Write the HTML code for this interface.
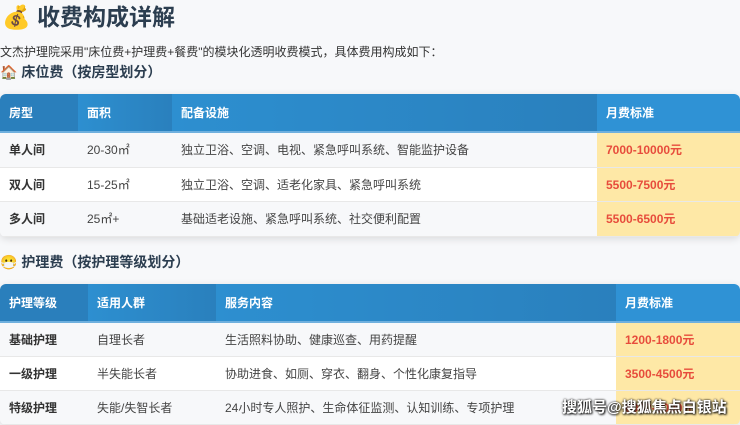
<!DOCTYPE html>
<html><head><meta charset="utf-8"><style>
*{margin:0;padding:0;box-sizing:border-box}
body{width:740px;height:422px;overflow:hidden;background:#f7f8fa;font-family:"Liberation Sans","Noto Sans CJK SC",sans-serif;color:#333;position:relative}
.h1{position:absolute;left:2px;top:0;font-size:23px;font-weight:bold;color:#2c3e50;line-height:34px}
.p{position:absolute;left:0;top:43px;font-size:12px;color:#333}
.h2{position:absolute;left:0;font-size:14px;font-weight:bold;color:#2c3e50}
table{position:absolute;left:0;border-collapse:collapse;font-size:12px;box-shadow:0 2px 8px rgba(0,0,0,.12);border-radius:6px;overflow:hidden}
th{background:linear-gradient(90deg,#2d8fd0,#2a80bd);color:#fff;text-align:left;padding-left:9px;font-weight:bold;height:38px;border-bottom:2px solid #6fb0de}
th.a{background:#2a7fbc}
th.b{background:#2f92d5}
td{padding-left:9px;border-bottom:1px solid #e8e8e8;background:#f7f8fa;color:#444}
tr.w td{background:#fff}
td.f{font-weight:bold;color:#333}
td.pr{background:#fee8a6!important;color:#e74c3c;font-weight:bold}
.wm{position:absolute;left:562px;top:396px;font-size:15px;color:#fff;font-weight:bold;text-shadow:0 0 2px #000,1px 1px 2px #000}
</style></head><body>
<div class="h1">💰 收费构成详解</div>
<div class="p">文杰护理院采用"床位费+护理费+餐费"的模块化透明收费模式，具体费用构成如下：</div>
<div class="h2" style="top:62px">🏠 床位费（按房型划分）</div>
<table style="top:94px;width:740px">
<tr><th class="a" style="width:78px">房型</th><th style="width:94px">面积</th><th style="width:425px">配备设施</th><th class="b">月费标准</th></tr>
<tr style="height:35px"><td class="f">单人间</td><td>20-30㎡</td><td>独立卫浴、空调、电视、紧急呼叫系统、智能监护设备</td><td class="pr">7000-10000元</td></tr>
<tr class="w" style="height:34px"><td class="f">双人间</td><td>15-25㎡</td><td>独立卫浴、空调、适老化家具、紧急呼叫系统</td><td class="pr">5500-7500元</td></tr>
<tr style="height:35px"><td class="f">多人间</td><td>25㎡+</td><td>基础适老设施、紧急呼叫系统、社交便利配置</td><td class="pr">5500-6500元</td></tr>
</table>
<div class="h2" style="top:252px">😷 护理费（按护理等级划分）</div>
<table style="top:284px;width:740px">
<tr><th class="a" style="width:88px">护理等级</th><th style="width:128px">适用人群</th><th style="width:400px">服务内容</th><th class="b">月费标准</th></tr>
<tr style="height:34px"><td class="f">基础护理</td><td>自理长者</td><td>生活照料协助、健康巡查、用药提醒</td><td class="pr">1200-1800元</td></tr>
<tr class="w" style="height:34px"><td class="f">一级护理</td><td>半失能长者</td><td>协助进食、如厕、穿衣、翻身、个性化康复指导</td><td class="pr">3500-4500元</td></tr>
<tr style="height:34px"><td class="f">特级护理</td><td>失能/失智长者</td><td>24小时专人照护、生命体征监测、认知训练、专项护理</td><td class="pr">6000-8000元</td></tr>
</table>
<div class="wm">搜狐号@搜狐焦点白银站</div>
</body></html>
